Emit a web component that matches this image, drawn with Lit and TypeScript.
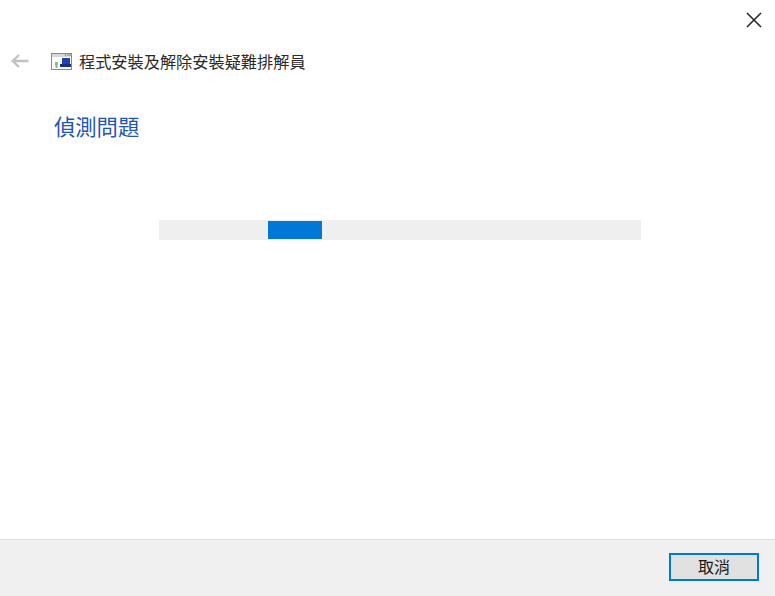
import { LitElement, html, css } from "lit";
import { customElement } from "lit/decorators.js";

@customElement("app-root")
export class AppRoot extends LitElement {
  static styles = css`
    :host {
      display: flex;
      flex-direction: column;
      width: 775px;
      height: 596px;
      background: #fff;
      font-family: "Noto Sans CJK TC", "Liberation Sans", sans-serif;
      overflow: hidden;
    }
    .main { flex: 1; display: flex; flex-direction: column; min-height: 0; }
    .close-row { display: flex; justify-content: flex-end; height: 41px; padding: 12px 13px 0 0; box-sizing: border-box; }
    .close { display: block; width: 16px; height: 16px; }
    .nav { display: flex; align-items: center; height: 40px; padding-left: 11px; }
    .back { display: block; width: 18px; height: 14px; margin-right: 22px; }
    .app-icon { display: block; width: 21px; height: 17px; margin-right: 7px; }
    .app-title { font-size: 16.2px; line-height: 22px; color: #2b2b2b; white-space: nowrap; }
    h1 { margin: 31px 0 0 54px; font-size: 21.3px; line-height: 28px; font-weight: 400; color: #1f55b5; }
    .track { margin: 80px 0 0 159px; width: 482px; height: 20px; background: #efefef; display: flex; align-items: center; padding-left: 109px; box-sizing: border-box; }
    .bar { width: 54px; height: 18px; background: #0078d7; }
    .footer { flex: none; height: 57px; box-sizing: border-box; background: #f0f0f0; border-top: 1px solid #dfdfdf; display: flex; justify-content: flex-end; align-items: center; padding: 0 16px 2px 0; }
    button { width: 90px; height: 28px; box-sizing: border-box; border: 2.5px solid #0078d7; background: #e1e1e1; font: inherit; font-size: 16px; line-height: 20px; color: #1a1a1a; padding: 0 0 2px; letter-spacing: 0; }
  `;

  render() {
    return html`
      <div class="main">
        <div class="close-row">
          <svg class="close" viewBox="0 0 16 16"><path d="M1 1 15 15M15 1 1 15" stroke="#222" stroke-width="1.5" fill="none"/></svg>
        </div>
        <div class="nav">
          <svg class="back" viewBox="0 0 18 14"><path d="M1.500 7H17.500M8 1 1.700 7l6.300 6" stroke="#c2c2c2" stroke-width="2.400" fill="none"/></svg>
          <svg class="app-icon" viewBox="0 0 21 17">
            <rect x=".5" y=".5" width="20" height="16" fill="#fff" stroke="#8a8a8a"/>
            <rect x="1" y="1" width="19" height="3" fill="#d8d8d8"/>
            <path d="M14 2h1M16.500 2h1M18.500 2h1" stroke="#666" stroke-width="1.500"/>
            <rect x="11" y="5" width="8" height="8" fill="#1f3fb5"/>
            <rect x="9" y="11" width="11" height="3" fill="#16307f"/>
            <rect x="4" y="9" width="3" height="3" fill="#7cc67c"/>
            <rect x="4.500" y="12" width="2" height="3" fill="#9aa89a"/>
          </svg>
          <span class="app-title">程式安裝及解除安裝疑難排解員</span>
        </div>
        <h1>偵測問題</h1>
        <div class="track"><div class="bar"></div></div>
      </div>
      <div class="footer"><button>取消</button></div>
    `;
  }
}
